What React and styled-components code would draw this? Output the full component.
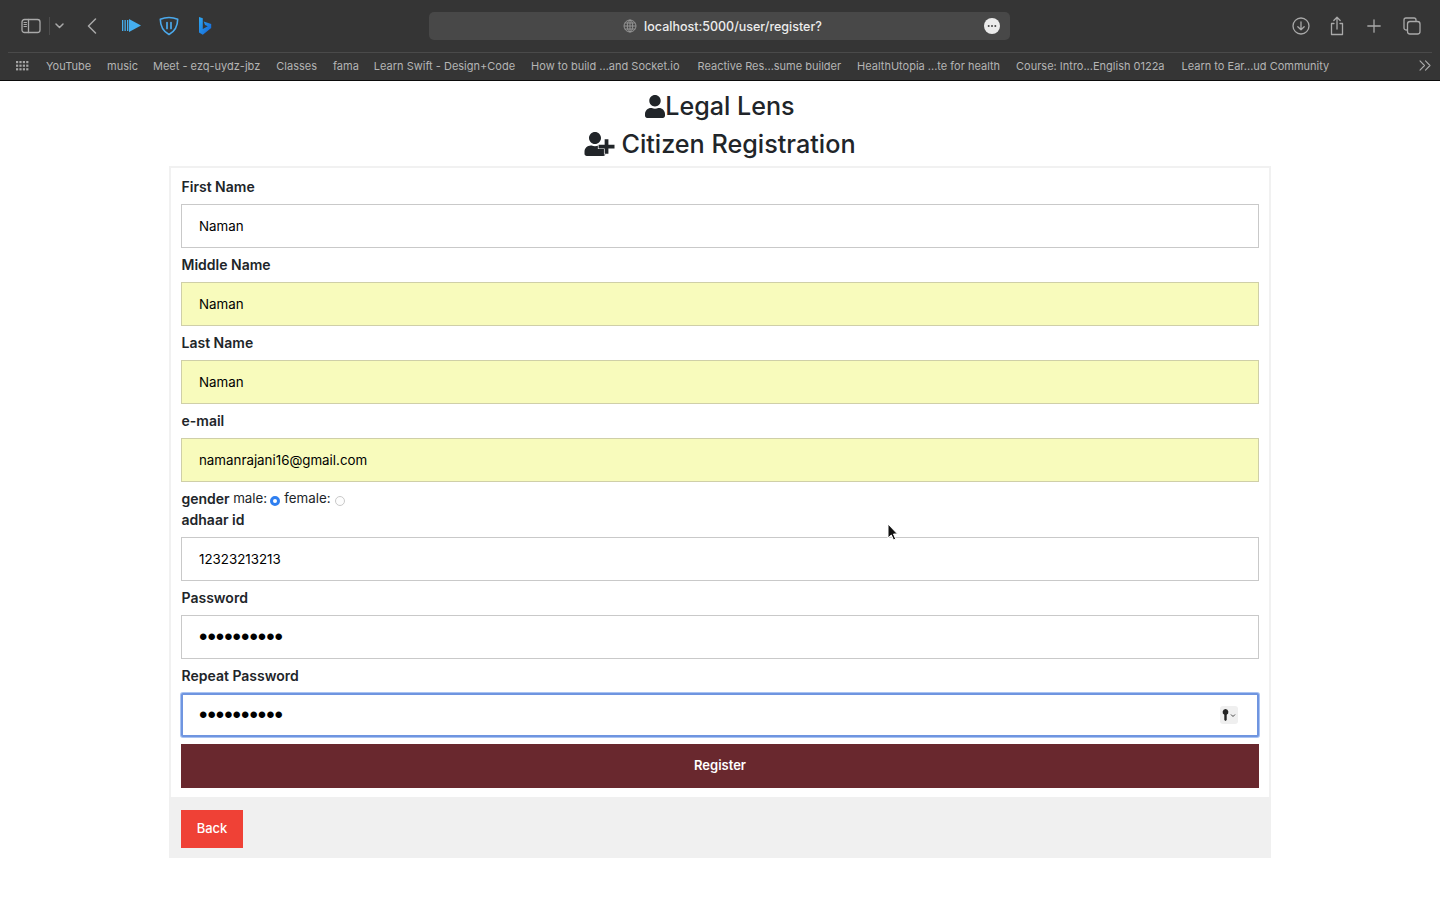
import React from "react";
import styled, { createGlobalStyle } from "styled-components";

const Global = createGlobalStyle`
  html, body { margin: 0; padding: 0; background: #fff; }
  body { font-family: Inter, "Liberation Sans", sans-serif; color: #212529; overflow: hidden; }
  * { box-sizing: border-box; }
`;

const Page = styled.div`
  position: relative;
  width: 1440px;
  height: 900px;
  overflow: hidden;
`;

const Chrome = styled.header`
  height: 81px;
  background: #353535;
  border-bottom: 1px solid #0b0b0b;
  display: flex;
  flex-direction: column;
  padding: 0 8px;
`;

const Toolbar = styled.div`
  height: 53px;
  border-bottom: 1px solid #4a4a4a;
  display: grid;
  grid-template-columns: 421px 581px 1fr;
  align-items: center;
`;

const ToolGroup = styled.div`
  display: flex;
  align-items: center;
  height: 100%;
  position: relative;
  justify-content: ${(p) => p.$justify || "flex-start"};
  padding: ${(p) => p.$padding || 0};
`;

const Tool = styled.svg`
  display: block;
  flex: none;
  margin-left: ${(p) => p.$ml || 0}px;
`;

const AddressBar = styled.div`
  height: 28px;
  width: 581px;
  background: #484848;
  border-radius: 5px;
  display: flex;
  align-items: center;
  justify-content: center;
  position: relative;
  color: #ececec;
  font-size: 12.5px;
  font-weight: 500;
  gap: 7px;
  padding-left: 6px;
`;

const MoreDot = styled.svg`
  position: absolute;
  right: 10px;
  top: 6px;
`;

const Bookmarks = styled.nav`
  height: 27px;
  display: flex;
  align-items: center;
  padding: 0 0 2px 8px;
  color: #b4b4b4;
  font-size: 11px;
  font-weight: 400;
  white-space: nowrap;
  position: relative;
`;

const Bookmark = styled.span`
  margin-left: ${(p) => p.$ml}px;
`;

const Main = styled.main`
  display: flex;
  flex-direction: column;
  align-items: center;
`;

const Title = styled.h1`
  margin: 0;
  height: 38px;
  display: flex;
  align-items: center;
  justify-content: center;
  gap: ${(p) => p.$gap || 0}px;
  font-size: ${(p) => p.$size || 25}px;
  font-weight: 500;
  line-height: 38px;
  color: #212529;
`;

const TitleFirst = styled(Title)`
  margin-top: 6px;
`;

const Card = styled.div`
  width: 1102px;
  margin-top: 3px;
  border: 2px solid #f1f1f1;
  border-bottom: none;
`;

const Form = styled.form`
  padding: 10px 10px 9px 10px;
  display: flex;
  flex-direction: column;
`;

const Field = styled.div`
  display: flex;
  flex-direction: column;
`;

const Label = styled.label`
  font-size: 14px;
  font-weight: 600;
  line-height: 18px;
  height: 26px;
  padding-left: 0.5px;
  display: block;
  color: #212529;
`;

const InputBox = styled.div`
  position: relative;
  height: 44px;
  margin-bottom: 8px;
`;

const Input = styled.input`
  display: block;
  width: 100%;
  height: 44px;
  padding: 0 17px 1px;
  border: 1px solid ${(p) => (p.$auto ? "#cfcfa8" : "#c9c9c9")};
  background: ${(p) => (p.$auto ? "#f8fbbc" : "#fff")};
  font-family: Inter, "Liberation Sans", sans-serif;
  font-size: 13.33px;
  color: #000;
  outline: none;
  border-radius: 0;
  ${(p) =>
    p.$password &&
    `
    font-family: "Liberation Sans", sans-serif;
    font-size: 24px;
    letter-spacing: 0;
  `}
  ${(p) =>
    p.$focus &&
    `
    border: 2px solid #6f95e0;
    box-shadow: 0 0 0 1px #a9c3f2;
    border-radius: 2px;
    padding: 0 16px 1px;
  `}
`;

const KeyButton = styled.div`
  position: absolute;
  right: 21px;
  top: 13px;
  width: 18px;
  height: 18px;
  border-radius: 3px;
  background: #efefef;
  display: flex;
  align-items: center;
  justify-content: center;
`;

const GenderRow = styled.div`
  display: flex;
  align-items: center;
  height: 21px;
  padding-bottom: 4px;
  font-size: 14px;
  line-height: 17px;
  color: #212529;
`;

const GenderLabel = styled.strong`
  font-weight: 600;
  margin-right: 3.5px;
  padding-left: 0.5px;
`;

const GenderText = styled.span`
  font-size: 13.33px;
`;

const Radio = styled.span`
  display: inline-block;
  width: 10px;
  height: 10px;
  border-radius: 50%;
  margin: 5px 4px 0 ${(p) => p.$left}px;
  background: ${(p) => (p.$on ? "#fff" : "#fdfdfd")};
  border: ${(p) => (p.$on ? "3px solid #2f7ff0" : "1px solid #c9c9c9")};
`;

const RegisterButton = styled.button`
  display: block;
  width: 100%;
  height: 44px;
  margin-top: -1px;
  padding: 0 0 2px;
  border: none;
  background: #69282e;
  color: #fff;
  font-family: Inter, "Liberation Sans", sans-serif;
  font-size: 13px;
  font-weight: 600;
`;

const Footer = styled.div`
  height: 61px;
  background: #f0f0f0;
  margin: 0 -2px;
  padding: 13px 12px 0;
`;

const BackButton = styled.button`
  display: block;
  width: 62px;
  height: 38px;
  padding: 0 0 2px;
  border: none;
  background: #ef4136;
  color: #fff;
  font-family: Inter, "Liberation Sans", sans-serif;
  font-size: 13px;
  font-weight: 500;
`;

const TitleIcon = styled.svg`
  display: block;
  flex: none;
  fill: #212529;
`;

const Cursor = styled.svg`
  position: absolute;
  left: 887px;
  top: 523px;
`;

const BookmarkData = [
  ["YouTube", 17],
  ["music", 16],
  ["Meet - ezq-uydz-jbz", 15],
  ["Classes", 16],
  ["fama", 16],
  ["Learn Swift - Design+Code", 15],
  ["How to build ...and Socket.io", 16],
  ["Reactive Res...sume builder", 18],
  ["HealthUtopia ...te for health", 16],
  ["Course: Intro...English 0122a", 16],
  ["Learn to Ear...ud Community", 17],
];

const stroke = { fill: "none", stroke: "#a9a9a9", strokeWidth: 1.3, strokeLinecap: "round", strokeLinejoin: "round" };

const userPath =
  "M224 256c70.700 0 128-57.300 128-128S294.700 0 224 0 96 57.300 96 128s57.300 128 128 128zm89.600 32h-16.700c-22.200 10.200-46.900 16-72.900 16s-50.600-5.800-72.900-16h-16.700C60.200 288 0 348.200 0 422.400V464c0 26.500 21.500 48 48 48h352c26.500 0 48-21.500 48-48v-41.600c0-74.200-60.200-134.400-134.400-134.400z";

function TextField({ label, value, auto }) {
  return (
    <Field>
      <Label>{label}</Label>
      <InputBox>
        <Input readOnly value={value} $auto={auto} />
      </InputBox>
    </Field>
  );
}

export default function App() {
  return (
    <Page>
      <Global />
      <Chrome>
        <Toolbar>
          <ToolGroup>
            <Tool $ml={13} width="20" height="16" viewBox="0 0 20 16" {...stroke}>
              <rect x="1" y="1.500" width="18" height="13" rx="2.500" />
              <path d="M7.500 1.500v13" />
              <path d="M3 4.500h2.500M3 6.500h2.500M3 8.500h2.500" strokeWidth="1" />
            </Tool>
            <Tool $ml={8} width="1" height="18" viewBox="0 0 1 18">
              <rect width="1" height="18" fill="#4c4c4c" />
            </Tool>
            <Tool $ml={5} width="9" height="6" viewBox="0 0 9 6" {...stroke} strokeWidth="1.500">
              <path d="M1 1l3.500 3.500L8 1" />
            </Tool>
            <Tool $ml={23} width="10" height="16" viewBox="0 0 10 16" {...stroke} strokeWidth="1.500">
              <path d="M8.500 1L1.500 8l7 7" />
            </Tool>
            <Tool $ml={25} width="19" height="14" viewBox="0 0 19 14">
              <path d="M0 1h1.300v11H0zM2.500 1h1.300v11H2.500zM5 1h1.300v11H5zM7 0l12 6.500L7 13z" fill="#45aeef" />
            </Tool>
            <Tool $ml={18} width="20" height="20" viewBox="0 0 20 20">
              <path d="M10 1.500c3 0 6 .6 8.700 1.700C18.600 10 15.700 15.500 10 18.500 4.300 15.500 1.400 10 1.300 3.200 4 2.100 7 1.500 10 1.500z" fill="none" stroke="#4ba9ec" strokeWidth="1.600" strokeLinejoin="round" />
              <path d="M8 6.500v6M12 6.500v6" stroke="#4ba9ec" strokeWidth="1.700" strokeLinecap="round" />
            </Tool>
            <Tool $ml={20} width="13" height="18" viewBox="0 0 13 18">
              <defs>
                <linearGradient id="bingGradient" x1="0" y1="0" x2="1" y2="1">
                  <stop offset="0" stopColor="#2fa8f0" />
                  <stop offset="1" stopColor="#1263d8" />
                </linearGradient>
              </defs>
              <path d="M0 0l3.800 1.300V12l5-2.800-2.800-1.300-1.300-3.400 7.500 2.600v3.900L3.800 17.800 0 15.400z" fill="url(#bingGradient)" />
            </Tool>
          </ToolGroup>
          <AddressBar>
            <Tool width="14" height="14" viewBox="0 0 14 14" fill="none" stroke="#9a9a9a" strokeWidth="0.900">
              <circle cx="7" cy="7" r="6" />
              <ellipse cx="7" cy="7" rx="2.700" ry="6" />
              <path d="M1 7h12M1.800 4h10.400M1.800 10h10.400M7 1v12" />
            </Tool>
            <span>localhost:5000/user/register?</span>
            <MoreDot width="16" height="16" viewBox="0 0 16 16">
              <circle cx="8" cy="8" r="8" fill="#ebebeb" />
              <circle cx="4.700" cy="8" r="1" fill="#444" />
              <circle cx="8" cy="8" r="1" fill="#444" />
              <circle cx="11.300" cy="8" r="1" fill="#444" />
            </MoreDot>
          </AddressBar>
          <ToolGroup $justify="flex-end" $padding="0 11px 0 0">
            <Tool width="18" height="18" viewBox="0 0 18 18" {...stroke}>
              <circle cx="9" cy="9" r="8" />
              <path d="M9 4.800v8M5.800 9.700L9 12.800l3.200-3.100" />
            </Tool>
            <Tool $ml={20} width="14" height="20" viewBox="0 0 14 20" {...stroke}>
              <path d="M4 7.500H1.500v11h11v-11H10" />
              <path d="M7 13V1.500M3.800 4.500L7 1.300l3.200 3.200" />
            </Tool>
            <Tool $ml={23} width="14" height="14" viewBox="0 0 14 14" {...stroke}>
              <path d="M7 .8v12.400M.8 7h12.400" />
            </Tool>
            <Tool $ml={22} width="18" height="18" viewBox="0 0 18 18" {...stroke}>
              <rect x="4.500" y="4.500" width="12.500" height="12.500" rx="2.500" />
              <path d="M3.500 13H3a2 2 0 0 1-2-2V3a2 2 0 0 1 2-2h8a2 2 0 0 1 2 2v.5" />
            </Tool>
          </ToolGroup>
        </Toolbar>
        <Bookmarks>
          <Tool width="13" height="10" viewBox="0 0 13 10" fill="#a6a6a6">
            {[0, 1, 2].map((r) =>
              [0, 1, 2, 3].map((c) => <rect key={`${r}-${c}`} x={c * 3.4} y={r * 3.6} width="2.200" height="2.200" />)
            )}
          </Tool>
          {BookmarkData.map(([t, ml]) => (
            <Bookmark key={t} $ml={ml}>{t}</Bookmark>
          ))}
          <Tool $ml={90} width="12" height="11" viewBox="0 0 12 11" {...stroke} strokeWidth="1.100">
            <path d="M1 .8L5.500 5.500 1 10.200M6.500 .8L11 5.500 6.500 10.200" />
          </Tool>
        </Bookmarks>
      </Chrome>
      <Main>
        <TitleFirst $size={25.1}>
          <TitleIcon width="20" height="23" viewBox="0 0 448 512">
            <path d={userPath} />
          </TitleIcon>
          <span>Legal Lens</span>
        </TitleFirst>
        <Title $gap={6} $size={25.2}>
          <TitleIcon width="31" height="24" viewBox="0 0 640 512">
            <path d={userPath} />
            <path
              d="M300 270h130V155h80v115h130v80H510v115h-80V350H300z"
              stroke="#fff"
              strokeWidth="30"
              paintOrder="stroke"
            />
          </TitleIcon>
          <span>Citizen Registration</span>
        </Title>
        <Card>
          <Form>
            <TextField label="First Name" value="Naman" />
            <TextField label="Middle Name" value="Naman" auto />
            <TextField label="Last Name" value="Naman" auto />
            <TextField label="e-mail" value="namanrajani16@gmail.com" auto />
            <GenderRow>
              <GenderLabel>gender</GenderLabel>
              <GenderText>male:</GenderText>
              <Radio $on $left={3} />
              <GenderText>female:</GenderText>
              <Radio $left={4} />
            </GenderRow>
            <TextField label="adhaar id" value="12323213213" />
            <Field>
              <Label>Password</Label>
              <InputBox>
                <Input readOnly type="password" value="1234567890" $password />
              </InputBox>
            </Field>
            <Field>
              <Label>Repeat Password</Label>
              <InputBox>
                <Input readOnly type="password" value="1234567890" $password $focus />
                <KeyButton>
                  <svg width="14" height="12" viewBox="0 0 14 12">
                    <path d="M3.500 0a3 3 0 0 1 1.200 5.700V11l-1.200 1-1.200-1V5.700A3 3 0 0 1 3.500 0z" fill="#222" />
                    <path d="M9 5.500l2 2 2-2" fill="none" stroke="#444" strokeWidth="1" />
                  </svg>
                </KeyButton>
              </InputBox>
            </Field>
            <RegisterButton type="button">Register</RegisterButton>
          </Form>
          <Footer>
            <BackButton type="button">Back</BackButton>
          </Footer>
        </Card>
      </Main>
      <Cursor width="12" height="19" viewBox="0 0 12 19">
        <path d="M1 1v14l3.300-3 2.200 5 2.200-1-2.200-5H10.500z" fill="#111" stroke="#fff" strokeWidth="1" />
      </Cursor>
    </Page>
  );
}
